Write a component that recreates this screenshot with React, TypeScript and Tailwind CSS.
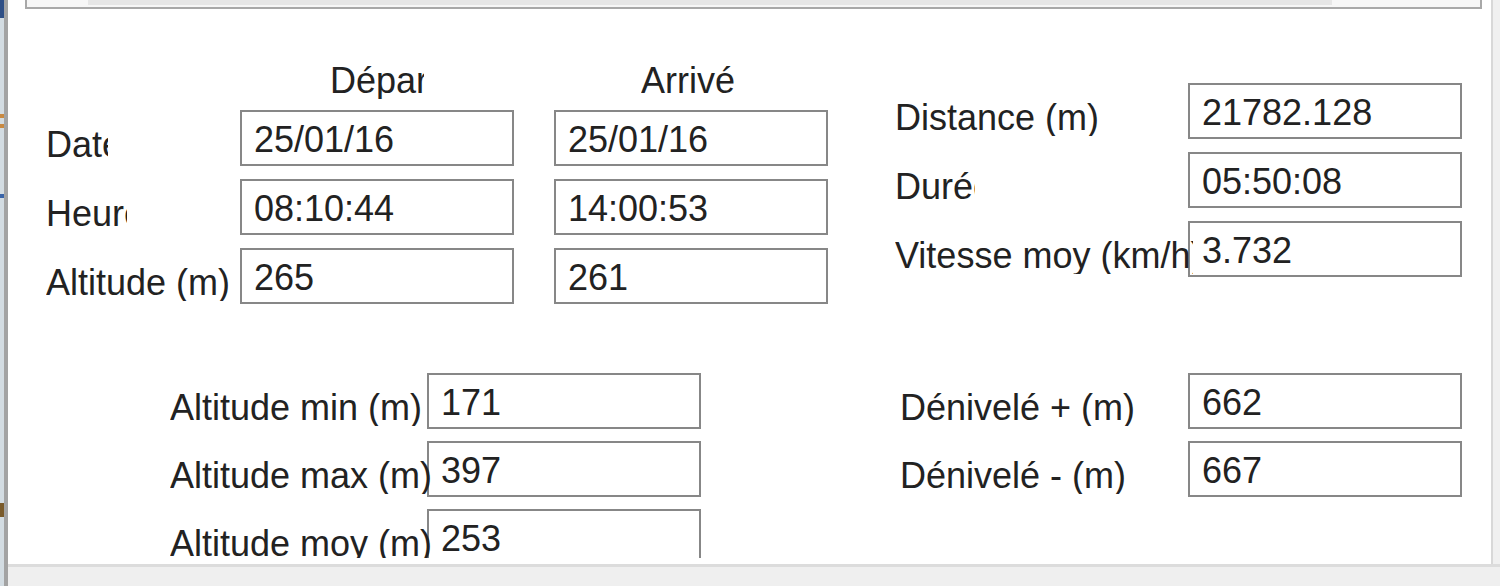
import React from "react";

const Box = ({ value, w = "w-[274px]" }: { value: string; w?: string }) => (
  <div
    className={`${w} h-[56px] shrink-0 border-2 border-[#878787] bg-white flex items-center pl-[12px] pt-[3px] leading-[36px] whitespace-nowrap overflow-hidden`}
  >
    {value}
  </div>
);

const Label = ({
  text,
  w,
  clip,
}: {
  text: string;
  w: string;
  clip?: string;
}) => (
  <div className={`${w} shrink-0 pt-[17px] leading-[36px] relative z-10`}>
    <div className={`${clip ?? ""} whitespace-nowrap overflow-hidden`}>{text}</div>
  </div>
);

export default function App() {
  return (
    <div className="w-[1500px] h-[586px] flex bg-[#f0f0f0] overflow-hidden font-['Liberation_Sans',Arial,sans-serif] text-[36px] text-[#222222]">
      {/* map strip on the far left */}
      <div className="w-[4px] h-full bg-[#d3dce2] flex flex-col">
        <div className="h-[18px] bg-[#2f4f86]" />
        <div className="h-[96px]" />
        <div className="h-[4px] bg-[#c98a43]" />
        <div className="h-[6px]" />
        <div className="h-[4px] bg-[#c98a43]" />
        <div className="h-[66px]" />
        <div className="h-[4px] bg-[#3a64a8]" />
        <div className="h-[305px]" />
        <div className="h-[14px] bg-[#7a5a2a]" />
      </div>
      <div className="w-[4px] h-full bg-[#a3a3a3]" />

      <div className="flex-1 flex flex-col">
        <div className="h-[564px] flex">
          <div className="w-[1483px] h-full bg-white overflow-hidden">
            <div className="h-[558px] overflow-hidden flex flex-col">
              {/* top box (bottom of previous control) */}
              <div className="ml-[17px] w-[1457px] h-[9px] shrink-0 border-x-2 border-b-2 border-[#a8a8a8] bg-[#f6f6f6]">
                <div className="ml-[61px] w-[1244px] h-[5px] bg-[#e6e6e6]" />
              </div>

              {/* section 1 */}
              <div className="flex items-start mt-[54px] shrink-0">
                {/* left group */}
                <div className="ml-[38px] flex flex-col">
                  <div className="flex h-[36px] leading-[36px]">
                    <div className="w-[284px] shrink-0" />
                    <div className="w-[94px] shrink-0 overflow-hidden whitespace-nowrap">Départ</div>
                    <div className="w-[217px] shrink-0" />
                    <div className="w-[95px] shrink-0 overflow-hidden whitespace-nowrap">Arrivée</div>
                  </div>
                  <div className="mt-[11px] flex flex-col gap-[13px]">
                    <div className="flex items-start">
                      <Label text="Date" w="w-[194px]" clip="w-[62px]" />
                      <Box value="25/01/16" />
                      <div className="w-[40px] shrink-0" />
                      <Box value="25/01/16" />
                    </div>
                    <div className="flex items-start">
                      <Label text="Heure" w="w-[194px]" clip="w-[81px]" />
                      <Box value="08:10:44" />
                      <div className="w-[40px] shrink-0" />
                      <Box value="14:00:53" />
                    </div>
                    <div className="flex items-start">
                      <Label text="Altitude (m)" w="w-[194px]" clip="w-[194px]" />
                      <Box value="265" />
                      <div className="w-[40px] shrink-0" />
                      <Box value="261" />
                    </div>
                  </div>
                </div>

                {/* right group */}
                <div className="ml-[67px] mt-[20px] flex flex-col gap-[13px]">
                  <div className="flex items-start">
                    <Label text="Distance (m)" w="w-[293px]" clip="w-[293px]" />
                    <Box value="21782.128" />
                  </div>
                  <div className="flex items-start">
                    <Label text="Durée" w="w-[293px]" clip="w-[80px]" />
                    <Box value="05:50:08" />
                  </div>
                  <div className="flex items-start">
                    <div className="w-[293px] shrink-0 pt-[17px] leading-[36px] relative z-10">
                      <div className="w-[298px] whitespace-nowrap overflow-hidden">Vitesse moy (km/h)</div>
                    </div>
                    <Box value="3.732" />
                  </div>
                </div>
              </div>

              {/* section 2 */}
              <div className="flex items-start mt-[69px] shrink-0">
                <div className="ml-[162px] flex flex-col gap-[12px]">
                  <div className="flex items-start">
                    <Label text="Altitude min (m)" w="w-[257px]" clip="w-[265px]" />
                    <Box value="171" />
                  </div>
                  <div className="flex items-start">
                    <Label text="Altitude max (m)" w="w-[257px]" clip="w-[265px]" />
                    <Box value="397" />
                  </div>
                  <div className="flex items-start">
                    <Label text="Altitude moy (m)" w="w-[257px]" clip="w-[265px]" />
                    <Box value="253" />
                  </div>
                </div>
                <div className="ml-[199px] flex flex-col gap-[12px]">
                  <div className="flex items-start">
                    <Label text="Dénivelé + (m)" w="w-[288px]" clip="w-[288px]" />
                    <Box value="662" />
                  </div>
                  <div className="flex items-start">
                    <Label text="Dénivelé - (m)" w="w-[288px]" clip="w-[288px]" />
                    <Box value="667" />
                  </div>
                </div>
              </div>
            </div>
          </div>
          <div className="w-[2px] h-full bg-[#d8d8d8]" />
          <div className="flex-1 h-full bg-[#f0f0f0]" />
        </div>
        <div className="h-[3px] bg-[#dcdcdc]" />
        <div className="flex-1 bg-[#efefef]" />
      </div>
    </div>
  );
}
